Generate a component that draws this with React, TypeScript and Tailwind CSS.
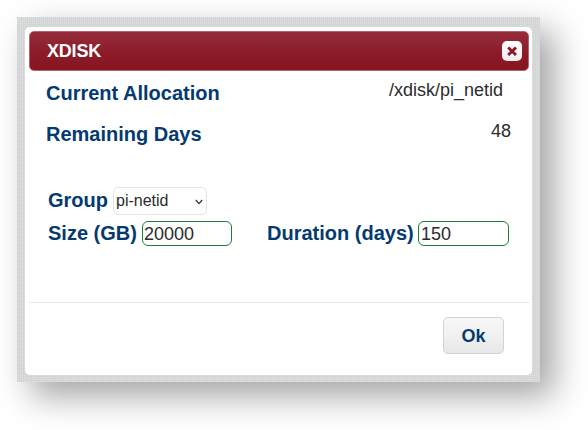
export default function App() {
  return (
    <div className="h-[430px] w-[588px] overflow-hidden bg-white pl-[17px] pt-[17px] font-['Liberation_Sans',Arial,sans-serif]">
      <div className="h-[365px] w-[523px] bg-[conic-gradient(#e2e2e2_25%,#d3d4d4_25%)] bg-size-[2px_2px] px-2 pb-[7px] pt-[10px] shadow-[14px_14px_32px_rgba(0,0,0,0.36)]">
        <div className="flex h-[348px] w-[507px] flex-col rounded-[5px] bg-white px-1 pt-1">
          <header className="flex h-10 w-[500px] shrink-0 items-center justify-between rounded-[5px] border border-[#b8606b] bg-linear-to-b from-[#942a37] from-10% via-[#8c1c29] via-50% to-[#841521] pl-[17px] pr-[6px]">
            <h1 className="text-[18px] leading-5 font-bold tracking-[-0.2px] text-white">XDISK</h1>
            <button aria-label="Close" className="flex size-5 items-center justify-center rounded-[5px] bg-linear-to-b from-white to-[#eeecec]">
              <svg viewBox="0 0 10 10" className="size-[10px]" stroke="#8b1724" strokeWidth="2.8" fill="none">
                <path d="M1.2 1.4 9 9M9 1.4 1.2 9" />
              </svg>
            </button>
          </header>

          <main className="h-[231px] shrink-0 text-[20px] leading-6 font-bold text-[#043a70]">
            <div className="flex h-[41px] justify-between pl-[17px] pr-[25px] pt-[10px]">
              <span>Current Allocation</span>
              <span className="-mt-0.5 text-[18px] leading-[22px] font-normal text-[#2b2b2b]">/xdisk/pi_netid</span>
            </div>
            <div className="flex h-[75px] justify-between pl-[17px] pr-[17px] pt-[10px]">
              <span>Remaining Days</span>
              <span className="-mt-0.5 text-[18px] leading-[22px] font-normal text-[#2b2b2b]">48</span>
            </div>
            <div className="flex h-[34px] pl-[19px]">
              <label className="w-[65px] pt-[1px]">Group</label>
              <div className="flex h-7 w-[94px] items-center justify-between rounded-[5px] border border-[#e3e3e3] pl-[2px] pr-[3px] text-[16px] leading-5 font-normal text-[#2b2b2b]">
                <span>pi-netid</span>
                <svg viewBox="0 0 8 6" className="mt-px h-[6px] w-[8px]" fill="none" stroke="#333" strokeWidth="1.3">
                  <path d="M0.8 1 4 4.6 7.2 1" />
                </svg>
              </div>
            </div>
            <div className="flex pl-[19px]">
              <label className="w-[94px]">Size (GB)</label>
              <input defaultValue="20000" className="h-[25px] w-[90px] rounded-[6px] border border-[#1a7d38] bg-white pt-px pl-px text-[18px] font-normal text-[#2b2b2b] outline-none" />
              <label className="ml-[35px] w-[151px]">Duration (days)</label>
              <input defaultValue="150" className="h-[25px] w-[91px] rounded-[6px] border border-[#1a7d38] bg-white pt-px pl-[2px] text-[18px] font-normal text-[#2b2b2b] outline-none" />
            </div>
          </main>

          <footer className="flex w-[500px] justify-end border-t border-[#e6e6e6] pr-[25px] pt-[14px]">
            <button className="h-[37px] w-[61px] rounded-[5px] border border-[#d2d3d5] bg-linear-to-b from-[#f7f7f7] via-[#f1f1f1] to-[#e7e7e8] pt-px text-[18px] font-bold text-[#043a70]">Ok</button>
          </footer>
        </div>
      </div>
    </div>
  );
}
